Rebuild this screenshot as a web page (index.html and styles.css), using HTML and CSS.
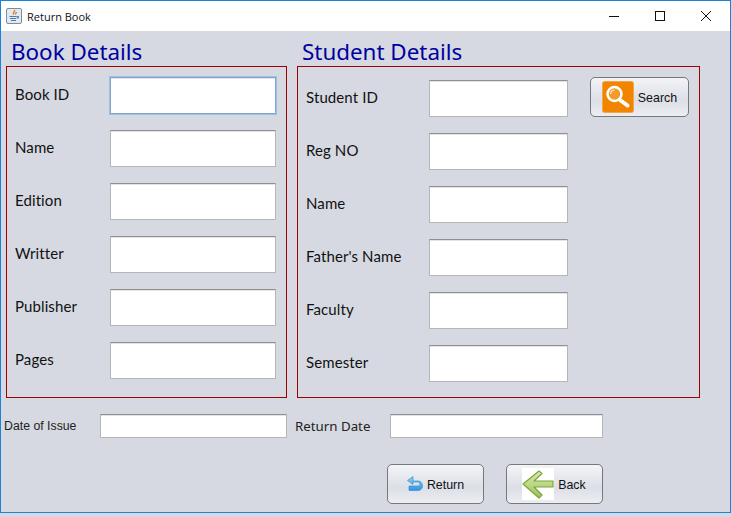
FILE: index.html
```html
<html>
  <head>
    <link rel="stylesheet" href="styles.css">
    <title>Return Book</title>
  </head>
  <body>
    <div class="window">
      <div class="titlebar">
        <svg class="app-icon" width="16" height="16" viewBox="0 0 16 16">
          <rect x="0.5" y="0.5" width="15" height="15" rx="1.5" fill="#e3e9f0" stroke="#7f8b99" />
          <path d="M8.500 2c1 1.500-2 2.500-1 4.500M10.500 4c0 1-1.500 1.500-1 2.500" fill="none" stroke="#e2711d" stroke-width="1.300" />
          <path d="M3.500 8.500h7M4 10.500h6M5 12.500h5" stroke="#4f7ca5" fill="none" />
          <path d="M10.500 8.500h2v1.500h-2" stroke="#4f7ca5" fill="none" />
        </svg>
        <span class="window-title">Return Book</span>
        <div class="window-controls">
          <svg width="12" height="12" viewBox="0 0 12 12"><path d="M1 6.500h10" stroke="#111" fill="none" /></svg>
          <svg width="12" height="12" viewBox="0 0 12 12"><rect x="1.500" y="1.500" width="9" height="9" stroke="#111" fill="none" /></svg>
          <svg width="12" height="12" viewBox="0 0 12 12"><path d="M1 1l10 10M11 1L1 11" stroke="#111" fill="none" /></svg>
        </div>
      </div>

      <div class="content">
        <div class="columns">
          <div class="book-col">
            <h1>Book Details</h1>
            <div class="panel book-panel">
              <div class="row"><label>Book ID</label><input class="focused"></div>
              <div class="row"><label>Name</label><input></div>
              <div class="row"><label>Edition</label><input></div>
              <div class="row"><label>Writter</label><input></div>
              <div class="row"><label>Publisher</label><input></div>
              <div class="row"><label>Pages</label><input></div>
            </div>
          </div>
          <div class="student-col">
            <h1>Student Details</h1>
            <div class="panel student-panel">
              <div class="row">
                <label>Student ID</label><input>
                <button class="search-btn">
                  <svg width="32" height="32" viewBox="0 0 32 32">
                    <rect x="0.500" y="0.500" width="31" height="31" rx="2" fill="#f28500" stroke="#f6a64a" />
                    <circle cx="12.500" cy="13" r="7" fill="#f59a26" stroke="#fff" stroke-width="2.500" />
                    <path d="M18 19l7.500 5.500" stroke="#fff" stroke-width="4" stroke-linecap="round" />
                    <path d="M8.500 13a4 4 0 0 1 4-4" stroke="#fff" fill="none" />
                  </svg>
                  <span>Search</span>
                </button>
              </div>
              <div class="row"><label>Reg NO</label><input></div>
              <div class="row"><label>Name</label><input></div>
              <div class="row"><label>Father's Name</label><input></div>
              <div class="row"><label>Faculty</label><input></div>
              <div class="row"><label>Semester</label><input></div>
            </div>
          </div>
        </div>

        <div class="dates">
          <span class="issue-label">Date of Issue</span>
          <input class="issue-input">
          <span class="return-label">Return Date</span>
          <input class="return-input">
        </div>

        <div class="actions">
          <button class="action-btn">
            <svg width="16" height="16" viewBox="0 0 16 16">
              <defs>
                <linearGradient id="returnFill" x1="0" y1="0" x2="0" y2="1">
                  <stop offset="0" stop-color="#8fd0f5" />
                  <stop offset="1" stop-color="#2f95e6" />
                </linearGradient>
              </defs>
              <path d="M6 0.500L0.500 4.500l5.500 4V6h5c2.500 0 2.500 4 0 4H2v4.500h9c6 0 6-9.500 0-9.500H6z" fill="url(#returnFill)" stroke="#2b86cf" stroke-width="0.600" />
            </svg>
            <span>Return</span>
          </button>
          <button class="action-btn back-btn">
            <svg width="32" height="32" viewBox="0 0 32 32">
              <defs>
                <linearGradient id="backFill" x1="0" y1="0" x2="0" y2="1">
                  <stop offset="0" stop-color="#dcebb0" />
                  <stop offset="1" stop-color="#9cc45a" />
                </linearGradient>
              </defs>
              <rect width="32" height="32" fill="#fff" />
              <path d="M1 16L17 3l3 2.500-8 7.500h19v6H12l8 8-3 3z" fill="url(#backFill)" stroke="#7aa63c" stroke-width="1.200" stroke-linejoin="round" />
            </svg>
            <span>Back</span>
          </button>
        </div>
      </div>
    </div>
  </body>
</html>
```

FILE: styles.css
```css
body {
  margin: 0;
  background-color: #d6d9e1;
}
.window {
  height: 513px;
  box-sizing: border-box;
  border: solid 1px #1883d7;
  display: flex;
  flex-direction: column;
}

.titlebar {
  height: 30px;
  background-color: white;
  display: flex;
  align-items: center;
  padding-left: 5px;
}
.app-icon {
  margin-right: 5px;
  margin-bottom: 1px;
}
.window-title {
  font-family: "Open Sans", sans-serif;
  font-size: 11px;
  color: #111;
}
.window-controls {
  margin-left: auto;
  display: flex;
  gap: 34px;
  padding-right: 18px;
}

.content {
  flex: 1;
  padding: 0 0 0 3px;
}
.columns {
  display: flex;
  gap: 10px;
  padding-left: 2px;
}
h1 {
  margin: 0;
  height: 35px;
  box-sizing: border-box;
  padding: 7px 0 0 5px;
  font-family: "Noto Sans", sans-serif;
  font-size: 22.400px;
  font-weight: normal;
  line-height: 28px;
  color: #0000a0;
}

.panel {
  box-sizing: border-box;
  height: 332px;
  border: solid 1px #a00000;
  padding-left: 8px;
  display: flex;
  flex-direction: column;
  gap: 16px;
}
.book-panel {
  width: 281px;
  padding-top: 10px;
}
.student-panel {
  width: 403px;
  padding-top: 13px;
}
.row {
  height: 37px;
  display: flex;
  align-items: center;
}
.row label {
  font-family: "Lato", sans-serif;
  font-size: 15px;
  letter-spacing: 0.1px;
  color: #111;
  padding-bottom: 3px;
}
.book-panel label {
  width: 95px;
}
.student-panel label {
  width: 123px;
}
.book-panel input {
  width: 166px;
}
.student-panel input {
  width: 139px;
}

input {
  box-sizing: border-box;
  height: 37px;
  padding: 0;
  background-color: white;
  border: solid 1px #b5b6b8;
  border-top-color: #8f9092;
  box-shadow: inset 0 1px #e4e4e4;
  border-radius: 0;
}
input.focused {
  border-color: #7da7d3;
  outline: solid 1px #a5c0dd;
}

button {
  box-sizing: border-box;
  padding: 0;
  height: 40px;
  width: 97px;
  font-family: "Liberation Sans", sans-serif;
  font-size: 12.400px;
  color: #111;
  border: solid 1px #76787c;
  border-radius: 5px;
  background: linear-gradient(#f3f4f7, #dcdfe6 60%, #eceef2);
  display: flex;
  align-items: center;
  justify-content: center;
  gap: 4px;
}
button span {
  padding-top: 2px;
}
.search-btn {
  width: 99px;
  align-self: flex-end;
  margin-left: 22px;
}

.dates {
  display: flex;
  align-items: center;
  height: 24px;
  margin-top: 16px;
}
.dates input {
  height: 24px;
}
.issue-label {
  width: 96px;
  font-family: "Liberation Sans", sans-serif;
  font-size: 12.300px;
  color: #222;
}
.issue-input {
  width: 187px;
}
.return-label {
  width: 95px;
  margin-left: 8px;
  font-family: "Noto Sans", sans-serif;
  font-size: 13.300px;
  color: #222;
}
.return-input {
  width: 213px;
}

.actions {
  display: flex;
  gap: 22px;
  margin-top: 26px;
  padding-left: 383px;
}
.action-btn {
  width: 97px;
}
.back-btn {
  padding-right: 1px;
}
```
